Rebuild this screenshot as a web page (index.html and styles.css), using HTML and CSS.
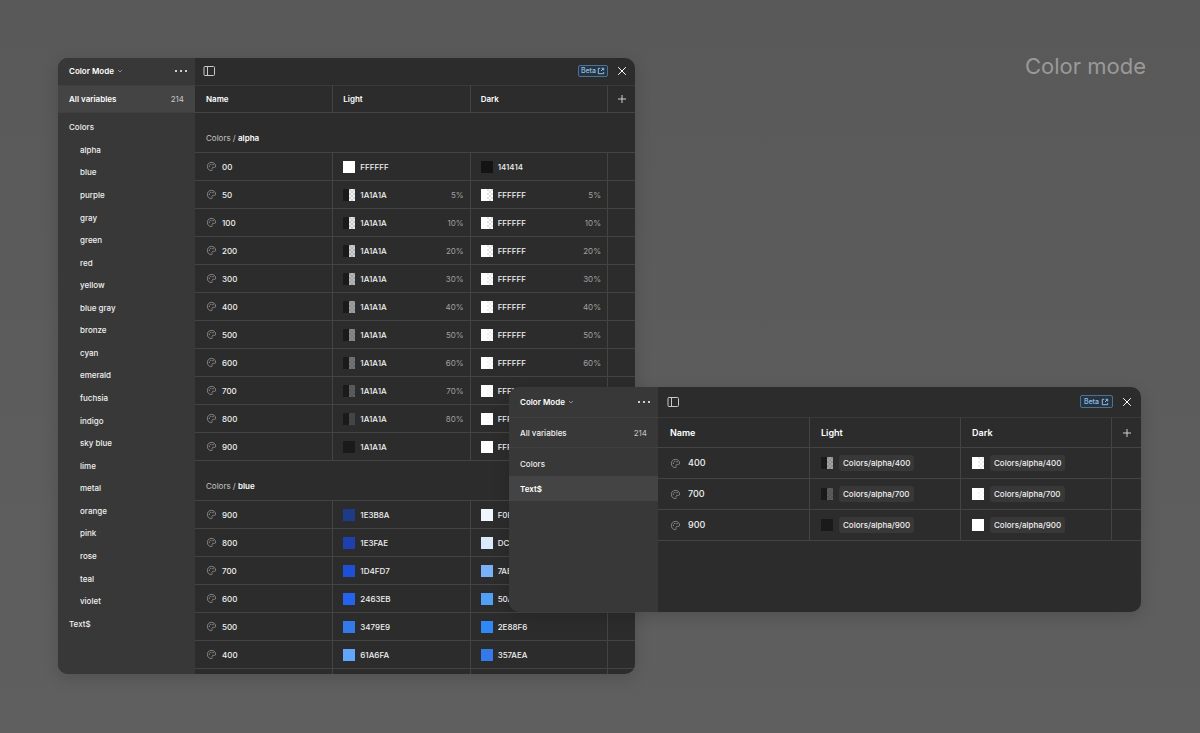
FILE: index.html
```
<!DOCTYPE html>
<html lang="en">
<head>
    <meta charset="UTF-8">
    <title>Color mode</title>
    <link rel="stylesheet" href="styles.css">
</head>
<body>
    <svg class="sprite" aria-hidden="true">
        <symbol id="chevron" viewBox="0 0 6 4"><path d="M1 1l2 2 2-2"/></symbol>
        <symbol id="panel" viewBox="0 0 12 12"><rect x="1" y="1.5" width="10.5" height="9" rx="1"/><path d="M4.5 1.5v9"/></symbol>
        <symbol id="close" viewBox="0 0 10 10"><path d="M1.2 1.2l7.6 7.6M8.800 1.200L1.200 8.800"/></symbol>
        <symbol id="plus" viewBox="0 0 10 10"><path d="M5 1v8M1 5h8"/></symbol>
        <symbol id="external" viewBox="0 0 8 8"><path d="M3.2 1.300H1.300v5.400h5.400V5M4.600 1.300h2.100v2.100M6.500 1.500L4 4"/></symbol>
        <symbol id="palette" viewBox="0 0 12 12">
            <path d="M6 1.500C3.300 1.500 1.500 3.500 1.500 6s1.800 4.500 4.300 4.500c.9 0 1.100-.7.8-1.400-.5-1.200.1-2.100 1.300-2.100h1.300c.9 0 1.300-.5 1.300-1.300C10.500 3.200 8.500 1.500 6 1.500z"/>
            <circle class="dot" cx="3.700" cy="5.600" r=".7"/><circle class="dot" cx="5.300" cy="3.600" r=".7"/><circle class="dot" cx="7.700" cy="4" r=".7"/>
        </symbol>
    </svg>

    <h1 class="page-title">Color mode</h1>

    <section class="window window-main">
        <aside class="sidebar">
            <div class="sidebar-header">
                <button class="collection">Color Mode <svg class="icon chevron"><use href="#chevron"/></svg></button>
                <button class="more" aria-label="More"><i></i><i></i><i></i></button>
            </div>
            <a class="all selected" href="#">All variables <span class="count">214</span></a>
            <nav class="groups">
                <a href="#">Colors</a>
                <a class="sub" href="#">alpha</a>
                <a class="sub" href="#">blue</a>
                <a class="sub" href="#">purple</a>
                <a class="sub" href="#">gray</a>
                <a class="sub" href="#">green</a>
                <a class="sub" href="#">red</a>
                <a class="sub" href="#">yellow</a>
                <a class="sub" href="#">blue gray</a>
                <a class="sub" href="#">bronze</a>
                <a class="sub" href="#">cyan</a>
                <a class="sub" href="#">emerald</a>
                <a class="sub" href="#">fuchsia</a>
                <a class="sub" href="#">indigo</a>
                <a class="sub" href="#">sky blue</a>
                <a class="sub" href="#">lime</a>
                <a class="sub" href="#">metal</a>
                <a class="sub" href="#">orange</a>
                <a class="sub" href="#">pink</a>
                <a class="sub" href="#">rose</a>
                <a class="sub" href="#">teal</a>
                <a class="sub" href="#">violet</a>
                <a href="#">Text$</a>
            </nav>
        </aside>
        <div class="content">
            <div class="toolbar">
                <button aria-label="Toggle sidebar"><svg class="icon panel"><use href="#panel"/></svg></button>
                <a class="beta" href="#">Beta <svg class="icon external"><use href="#external"/></svg></a>
                <button aria-label="Close"><svg class="icon close"><use href="#close"/></svg></button>
            </div>
            <table id="colors-table">
                <thead>
                    <tr>
                        <th>Name</th>
                        <th>Light</th>
                        <th>Dark</th>
                        <th class="add"><button aria-label="Add mode"><svg class="icon plus"><use href="#plus"/></svg></button></th>
                    </tr>
                </thead>
            </table>
        </div>
    </section>

    <section class="window window-text">
        <aside class="sidebar">
            <div class="sidebar-header">
                <button class="collection">Color Mode <svg class="icon chevron"><use href="#chevron"/></svg></button>
                <button class="more" aria-label="More"><i></i><i></i><i></i></button>
            </div>
            <a class="all" href="#">All variables <span class="count">214</span></a>
            <nav class="groups">
                <a href="#">Colors</a>
                <a class="selected" href="#">Text$</a>
            </nav>
        </aside>
        <div class="content">
            <div class="toolbar">
                <button aria-label="Toggle sidebar"><svg class="icon panel"><use href="#panel"/></svg></button>
                <a class="beta" href="#">Beta <svg class="icon external"><use href="#external"/></svg></a>
                <button aria-label="Close"><svg class="icon close"><use href="#close"/></svg></button>
            </div>
            <table id="text-table">
                <thead>
                    <tr>
                        <th>Name</th>
                        <th>Light</th>
                        <th>Dark</th>
                        <th class="add"><button aria-label="Add mode"><svg class="icon plus"><use href="#plus"/></svg></button></th>
                    </tr>
                </thead>
            </table>
        </div>
    </section>

    <script src="script.js"></script>
</body>
</html>
```
FILE: styles.css
```
* {
    box-sizing: border-box;
}

body {
    margin: 0;
    height: 100vh;
    overflow: hidden;
    position: relative;
    background: linear-gradient(#595959, #5f5f5f);
    font-family: Inter, sans-serif;
    font-size: 8px;
    font-weight: 500;
    line-height: 12px;
    color: #f0f0f0;
}

a {
    color: inherit;
    text-decoration: none;
}

button {
    display: flex;
    align-items: center;
    padding: 0;
    border: 0;
    background: none;
    color: inherit;
    font: inherit;
    cursor: pointer;
}

.sprite {
    position: absolute;
    width: 0;
    height: 0;
}

.icon {
    display: block;
    flex: none;
    fill: none;
    stroke: currentColor;
    stroke-width: 1;
}

.page-title {
    margin: 0;
    padding: 52px 54px 0 0;
    text-align: right;
    font-size: 22px;
    font-weight: 400;
    line-height: 28px;
    color: #999;
}

/* Windows */
.window {
    position: absolute;
    display: flex;
    overflow: hidden;
    border-radius: 10px;
    background: #2c2c2c;
    box-shadow: 0 4px 16px rgba(0, 0, 0, 0.15);
}

.window-main {
    --bar: 27px;
    --row: 28px;
    --add: 28px;
    --name-pad: 11px;
    --cell-pad: 10px;
    top: 58px;
    bottom: 59px;
    left: 58px;
    width: 577px;
}

.window-text {
    --bar: 30px;
    --row: 31px;
    --add: 30px;
    --name-pad: 12px;
    --cell-pad: 11px;
    top: 387px;
    left: 509px;
    right: 59px;
    min-height: 225px;
}

/* Sidebar */
.sidebar {
    display: flex;
    flex-direction: column;
    flex: none;
    width: 137px;
    background: #383838;
}

.window-text .sidebar {
    width: 149px;
}

.sidebar-header,
.all {
    display: flex;
    align-items: center;
    justify-content: space-between;
}

.sidebar-header {
    height: var(--bar);
    padding: 0 8px 1px 11px;
    font-weight: 600;
    color: #fff;
}

.all {
    height: var(--row);
    padding: 0 11px;
    border-top: 1px solid #404040;
    border-bottom: 1px solid #404040;
}

.count {
    font-weight: 400;
    color: #c4c4c4;
}

.chevron {
    width: 6px;
    height: 4px;
    margin-left: 3px;
    color: #8c8c8c;
}

.more {
    gap: 3px;
}

.more i {
    width: 2px;
    height: 2px;
    border-radius: 50%;
    background: #fff;
}

.groups {
    display: flex;
    flex-direction: column;
    flex: 1;
    padding: 3px 0 39px;
}

.groups a {
    display: flex;
    align-items: center;
    flex: 1;
    padding: 0 11px;
}

.groups .sub {
    padding-left: 22px;
}

.window-text .groups a {
    flex: 0 0 25px;
}

.sidebar .selected {
    background: #444;
    font-weight: 600;
    color: #fff;
}

/* Content */
.content {
    flex: 1;
    min-width: 0;
}

.toolbar {
    display: flex;
    align-items: center;
    gap: 9px;
    height: var(--bar);
    padding: 0 8px 1px;
}

.panel {
    width: 12px;
    height: 12px;
    color: #c8c8c8;
}

.close {
    width: 10px;
    height: 10px;
    color: #fff;
}

.plus {
    width: 10px;
    height: 10px;
    color: #d0d0d0;
}

.beta {
    display: flex;
    align-items: center;
    gap: 1px;
    height: 12px;
    margin-left: auto;
    padding: 0 2px;
    border: 1px solid #4d7291;
    border-radius: 2px;
    background: #263340;
    font-size: 7px;
    color: #8fc0e8;
}

.external {
    width: 8px;
    height: 8px;
}

.window-text .toolbar {
    padding: 0 9px 1px;
}

.window-text .beta {
    gap: 2px;
    height: 13px;
    padding: 0 3px;
}

table {
    width: 100%;
    table-layout: fixed;
    border-collapse: separate;
    border-spacing: 0;
}

th,
td {
    height: var(--row);
    padding: 0 6px 0 var(--cell-pad);
    border-bottom: 1px solid #444;
    border-left: 1px solid #444;
    text-align: left;
}

th {
    border-top: 1px solid #3a3a3a;
    font-weight: 600;
    color: #fff;
}

th:first-child,
td:first-child {
    padding-left: var(--name-pad);
    border-left: 0;
}

.window-text th,
.window-text td {
    font-size: 9px;
}

th.add {
    width: var(--add);
    padding: 0;
}

.add button {
    margin: 0 auto;
}

.group td {
    height: 40px;
    padding-top: 11px;
    font-weight: 400;
    color: #c4c4c4;
}

.group b {
    font-weight: 600;
    color: #fff;
}

.cell {
    display: flex;
    align-items: center;
}

.palette {
    width: 11px;
    height: 11px;
    margin-right: 5px;
    stroke-width: 0.8;
    color: #a0a0a0;
}

.window-text .palette {
    margin-right: 7px;
}

.dot {
    fill: currentColor;
    stroke: none;
}

.swatch {
    display: flex;
    flex: none;
    width: 12px;
    height: 12px;
    margin-right: 5px;
    background: repeating-conic-gradient(#ddd 0 25%, #fff 0 50%) 0 0 / 4px 4px;
}

.swatch i {
    flex: 1;
}

.opacity {
    margin-left: auto;
    font-weight: 400;
    color: #a0a0a0;
}

.alias {
    padding: 2px 4px;
    border-radius: 3px;
    background: #383838;
    font-size: 8px;
}

.window-text .swatch {
    margin-right: 6px;
}
```
FILE: script.js
```
// [name, light, dark, opacity]
const alpha = [
    ['00', 'FFFFFF', '141414'],
    ['50', '1A1A1A', 'FFFFFF', 5],
    ['100', '1A1A1A', 'FFFFFF', 10],
    ['200', '1A1A1A', 'FFFFFF', 20],
    ['300', '1A1A1A', 'FFFFFF', 30],
    ['400', '1A1A1A', 'FFFFFF', 40],
    ['500', '1A1A1A', 'FFFFFF', 50],
    ['600', '1A1A1A', 'FFFFFF', 60],
    ['700', '1A1A1A', 'FFFFFF', 70],
    ['800', '1A1A1A', 'FFFFFF', 80],
    ['900', '1A1A1A', 'FFFFFF']
];

const blue = [
    ['900', '1E3B8A', 'F0F6FE'],
    ['800', '1E3FAE', 'DCE9FD'],
    ['700', '1D4FD7', '7AB0F8'],
    ['600', '2463EB', '50A0F6'],
    ['500', '3479E9', '2E88F6'],
    ['400', '61A6FA', '357AEA']
];

function swatch(hex, opacity = 100) {
    return `<span class="swatch">
        <i style="background: #${hex}"></i>
        <i style="background: #${hex}; opacity: ${opacity}%"></i>
    </span>`;
}

function nameCell(name) {
    return `<td><div class="cell"><svg class="icon palette"><use href="#palette"/></svg>${name}</div></td>`;
}

function colorCell(hex, opacity) {
    const percent = opacity ? `<span class="opacity">${opacity}%</span>` : '';
    return `<td><div class="cell">${swatch(hex, opacity)}${hex}${percent}</div></td>`;
}

function aliasCell(name, hex, opacity) {
    return `<td><div class="cell">${swatch(hex, opacity)}<span class="alias">Colors/alpha/${name}</span></div></td>`;
}

function addGroup(table, title, colors) {
    const rows = colors.map(([name, light, dark, opacity]) =>
        `<tr>${nameCell(name)}${colorCell(light, opacity)}${colorCell(dark, opacity)}<td></td></tr>`
    );
    table.insertAdjacentHTML('beforeend',
        `<tbody><tr class="group"><td colspan="4">Colors / <b>${title}</b></td></tr>${rows.join('')}</tbody>`);
}

const colorsTable = document.getElementById('colors-table');
addGroup(colorsTable, 'alpha', alpha);
addGroup(colorsTable, 'blue', blue);
// empty row so the column lines run to the window edge
colorsTable.insertAdjacentHTML('beforeend', '<tbody><tr><td></td><td></td><td></td><td></td></tr></tbody>');

// Text$ variables point at the alpha scale
const textRows = alpha
    .filter(([name]) => ['400', '700', '900'].includes(name))
    .map(([name, light, dark, opacity]) =>
        `<tr>${nameCell(name)}${aliasCell(name, light, opacity)}${aliasCell(name, dark, opacity)}<td></td></tr>`
    );
document.getElementById('text-table').insertAdjacentHTML('beforeend', `<tbody>${textRows.join('')}</tbody>`);
```
